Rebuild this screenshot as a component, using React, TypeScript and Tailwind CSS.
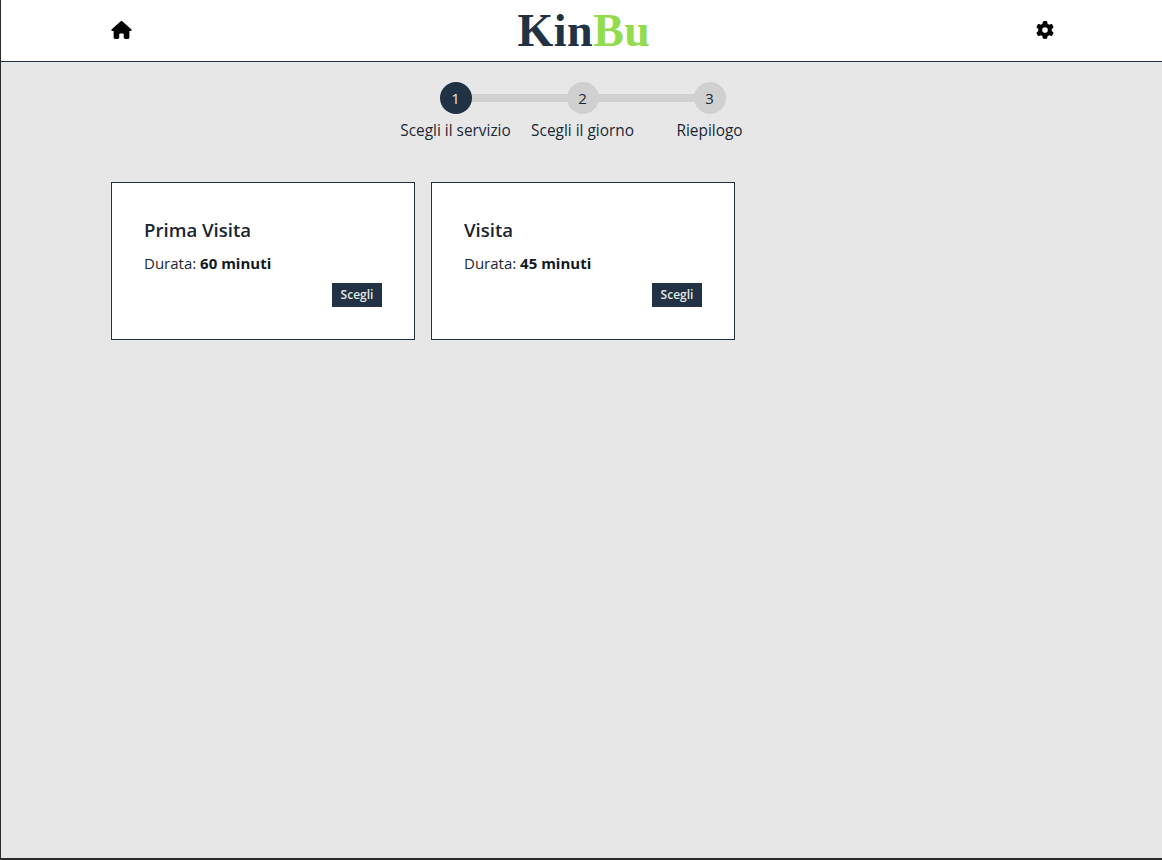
import { FaGear, FaHouse } from "react-icons/fa6";

const steps = [
  { n: 1, label: "Scegli il servizio", active: true },
  { n: 2, label: "Scegli il giorno", active: false },
  { n: 3, label: "Riepilogo", active: false },
];

const services = [
  { name: "Prima Visita", time: "60 minuti" },
  { name: "Visita", time: "45 minuti" },
];

function Stepper() {
  return (
    <div className="flex justify-center pl-[2px] pt-5">
      <div className="flex">
        {steps.map((s, i) => (
          <div key={s.n} className="relative flex w-[127px] flex-col items-center">
            {i < steps.length - 1 && (
              <div className="absolute left-[63px] top-[12px] h-2 w-[127px] bg-[#d0d0d0]" />
            )}
            <div
              className={`relative flex h-8 w-8 items-center justify-center rounded-full text-[15px] ${
                s.active ? "bg-[#203243] text-[#e6e6e6]" : "bg-[#d0d0d0] text-[#1a2836]"
              }`}
            >
              {s.n}
            </div>
            <div className="mt-[6px] whitespace-nowrap text-[15.4px] leading-[22px] text-[#1a2836]">{s.label}</div>
          </div>
        ))}
      </div>
    </div>
  );
}

function ServiceCard({ name, time }: { name: string; time: string }) {
  return (
    <div className="h-[158px] w-[304px] border border-[#203243] bg-white px-8 pt-[33px]">
      <h2 className="text-[18.6px] font-semibold leading-[28px] text-[#1a2530]">{name}</h2>
      <p className="mt-[8px] text-[15px] leading-[22px] text-[#1a2836]">
        Durata: <b className="font-bold text-[#111a22]">{time}</b>
      </p>
      <div className="mt-[9px] flex justify-end">
        <button className="h-6 w-[50px] bg-[#203243] text-[12px] font-semibold text-[#e6e6e6]">Scegli</button>
      </div>
    </div>
  );
}

export default function App() {
  return (
    <div className="flex h-[860px] flex-col border-b-2 border-l border-[#2b2b2b] bg-[#e7e7e7] font-['Open_Sans','Noto_Sans',sans-serif]">
      <header className="flex h-[62px] items-center justify-between border-b border-[#203243] bg-white pl-[110px] pr-[108px]">
        <FaHouse className="-mt-[2px] h-[18px] w-[21px] text-black" />
        <div className="font-['Liberation_Serif',serif] text-[46px] font-bold leading-none tracking-[0.5px]">
          <span className="text-[#203243]">Kin</span>
          <span className="text-[#93dc50]">Bu</span>
        </div>
        <FaGear className="-mt-[2px] h-[18px] w-[18px] text-black" />
      </header>
      <Stepper />
      <main className="flex gap-4 pl-[110px] pt-[40px]">
        {services.map((s) => (
          <ServiceCard key={s.name} name={s.name} time={s.time} />
        ))}
      </main>
    </div>
  );
}
